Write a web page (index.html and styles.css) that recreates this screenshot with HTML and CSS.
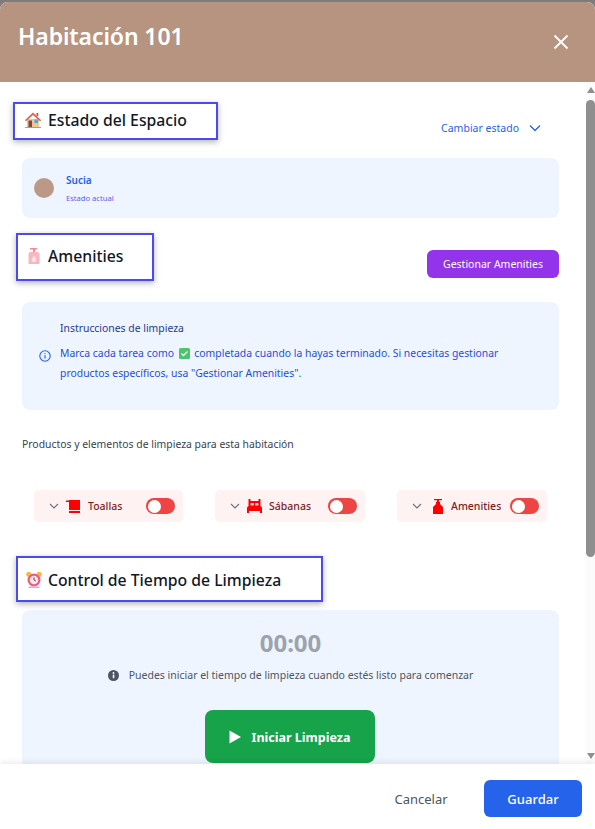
FILE: index.html
```html
<!DOCTYPE html>
<html lang="es">
<head>
<meta charset="utf-8">
<title>Habitación 101</title>
<link rel="stylesheet" href="styles.css">
</head>
<body>
<div class="behind"><span class="behind-a">Chat</span><span class="behind-b">Precios Inteligentes</span></div>
<div class="modal">
  <header class="modal-header">
    <h1>Habitación 101</h1>
    <svg class="close" width="16" height="16" viewBox="0 0 16 16"><path d="M1.500 1.500l13 13M14.500 1.500l-13 13" stroke="#fff" stroke-width="1.800" fill="none"/></svg>
  </header>
  <div class="modal-main">
    <div class="content">
      <section class="row row-estado">
        <h2 class="mark mark-estado">
          <svg class="emoji" width="18" height="18" viewBox="0 0 18 18"><path d="M3 8h12v8H3z" fill="#f2c58f"/><path d="M.8 9.200L9 1.500l8.200 7.700-1.200 1L9 4 2 10.200z" fill="#e8604c"/><path d="M4.500 9.500h3.500V16H4.500z" fill="#7a4a3c"/><path d="M10.500 8.500h3.500V12h-3.500z" fill="#39aee8"/><path d="M1 16h16v1H1z" fill="#5fc86a"/><path d="M12.500 2h1.800v3h-1.800z" fill="#c9543f"/></svg>
          <span>Estado del Espacio</span>
        </h2>
        <div class="change"><span>Cambiar estado</span><svg width="12" height="8" viewBox="0 0 12 8"><path d="M1 1.500l5 5 5-5" stroke="#2563eb" stroke-width="1.300" fill="none"/></svg></div>
      </section>
      <div class="card status">
        <i class="dot"></i>
        <div class="status-text"><b>Sucia</b><small>Estado actual</small></div>
      </div>
      <section class="row row-amen">
        <h2 class="mark mark-amen">
          <svg class="emoji" width="18" height="18" viewBox="0 0 18 18"><path d="M5 1h7v1.500H10V5H8V2.500H5z" fill="#ef8a9a"/><path d="M3.500 7c0-1.300 1-2 2.500-2h6c1.500 0 2.500.7 2.500 2v10h-11z" fill="#f7b6c2"/><path d="M9 8.500c1.500 2 2.300 3 2.300 4.200a2.300 2.300 0 0 1-4.600 0c0-1.200.8-2.200 2.300-4.200z" fill="#fde3e8"/></svg>
          <span>Amenities</span>
        </h2>
        <button class="manage">Gestionar Amenities</button>
      </section>
      <div class="card info">
        <svg class="info-icon" width="12" height="12" viewBox="0 0 12 12"><circle cx="6" cy="6" r="5.200" fill="none" stroke="#2563eb" stroke-width="1.100"/><path d="M6 5.300v3.200" stroke="#2563eb" stroke-width="1.200"/><circle cx="6" cy="3.600" r=".7" fill="#2563eb"/></svg>
        <div class="info-text">
          <p class="info-title">Instrucciones de limpieza</p>
          <p class="info-body">Marca cada tarea como <svg class="check" width="11" height="11" viewBox="0 0 11 11"><rect width="11" height="11" rx="1.500" fill="#4cc46f"/><path d="M2.500 5.500l2 2 4-4" stroke="#eafff0" stroke-width="1.300" fill="none"/></svg> completada cuando la hayas terminado. Si necesitas gestionar productos específicos, usa "Gestionar Amenities".</p>
        </div>
      </div>
      <p class="products">Productos y elementos de limpieza para esta habitación</p>
      <div class="chips">
        <div class="chip chip-first">
          <svg class="chev" width="10" height="6" viewBox="0 0 10 6"><path d="M1 1l4 4 4-4" stroke="#6b7280" stroke-width="1.100" fill="none"/></svg>
          <svg class="chip-icon" width="15" height="15" viewBox="0 0 15 15"><path d="M0 1.500h3V1h11v10H3V3H1.500V3H0z" fill="#f00"/><path d="M3 12h11v2H3z" fill="#f00"/></svg>
          <span class="chip-label">Toallas</span>
          <i class="toggle"></i>
        </div>
        <div class="chip">
          <svg class="chev" width="10" height="6" viewBox="0 0 10 6"><path d="M1 1l4 4 4-4" stroke="#6b7280" stroke-width="1.100" fill="none"/></svg>
          <svg class="chip-icon" width="15" height="15" viewBox="0 0 15 15"><path d="M1.500 0h2v2h8V0h2v7l1.500 1.500V14h-2v-2H2v2H0V8.500L1.500 7z" fill="#f00"/><rect x="3.500" y="4" width="3.500" height="2.500" rx=".8" fill="#ffd0d0"/><rect x="8" y="4" width="3.500" height="2.500" rx=".8" fill="#ffd0d0"/></svg>
          <span class="chip-label">Sábanas</span>
          <i class="toggle"></i>
        </div>
        <div class="chip chip-third">
          <svg class="chev" width="10" height="6" viewBox="0 0 10 6"><path d="M1 1l4 4 4-4" stroke="#6b7280" stroke-width="1.100" fill="none"/></svg>
          <svg class="chip-icon" width="12" height="15" viewBox="0 0 12 15"><path d="M2 0h8v1.200H7V3h1v2l3 3v7H1V8l3-3V3h1V1.200H2z" fill="#f00"/></svg>
          <span class="chip-label">Amenities</span>
          <i class="toggle"></i>
        </div>
      </div>
      <h2 class="mark mark-time">
        <svg class="emoji" width="18" height="18" viewBox="0 0 18 18"><circle cx="3.800" cy="3.300" r="2.600" fill="#f4b942"/><circle cx="14.200" cy="3.300" r="2.600" fill="#f4b942"/><circle cx="9" cy="9" r="6.500" fill="#ef5a7a"/><circle cx="9" cy="9" r="4.300" fill="#fde8ec"/><path d="M9 6.300V9l1.800 1" stroke="#6a3a50" stroke-width="1" fill="none"/><path d="M3.500 15.500h11V17h-11z" fill="#d6a8dc"/></svg>
        <span>Control de Tiempo de Limpieza</span>
      </h2>
      <div class="card timer">
        <div class="clock">00:00</div>
        <p class="hint"><svg width="11" height="11" viewBox="0 0 12 12"><circle cx="6" cy="6" r="6" fill="#4b5563"/><rect x="5.200" y="5" width="1.700" height="4" fill="#fff"/><circle cx="6" cy="3.300" r="1" fill="#fff"/></svg><span>Puedes iniciar el tiempo de limpieza cuando estés listo para comenzar</span></p>
        <button class="start"><svg width="12" height="14" viewBox="0 0 12 14"><path d="M.5.500L12 7 .5 13.500z" fill="#fff"/></svg><span>Iniciar Limpieza</span></button>
      </div>
    </div>
    <div class="scrollbar">
      <i class="arrow-up"></i>
      <i class="thumb"></i>
      <i class="arrow-down"></i>
    </div>
  </div>
  <footer class="modal-footer">
    <button class="cancel">Cancelar</button>
    <button class="save">Guardar</button>
  </footer>
</div>
</body>
</html>
```
FILE: styles.css
```css
* { box-sizing: border-box; }
html, body { margin: 0; height: 829px; overflow: hidden; }
body { background: #7c7c7c; font-family: "Noto Sans", "Open Sans", sans-serif; position: relative; padding-top: 2px; }
h1, h2, p { margin: 0; }
button { font-family: inherit; border: 0; cursor: pointer; }
.behind { position: absolute; top: -13px; left: 0; height: 15px; overflow: hidden; font-size: 16px; line-height: 20px; color: #333; white-space: nowrap; }
.behind-a { position: absolute; left: 56px; }
.behind-b { position: absolute; left: 163px; }
.modal { height: 827px; background: #fff; border-radius: 8px 8px 0 0; display: flex; flex-direction: column; overflow: hidden; }
.modal-header { height: 80px; flex: none; background: #b79480; display: flex; justify-content: space-between; padding: 18px 26px 0 18px; }
.modal-header h1 { font-size: 23px; line-height: 32px; font-weight: 600; color: #fff; letter-spacing: -.1px; }
.close { margin-top: 14px; }
.modal-main { flex: 1; min-height: 0; display: flex; overflow: hidden; }
.content { flex: 1; min-width: 0; padding: 20px 27px 0 22px; overflow: hidden; }
.row { display: flex; justify-content: space-between; }
.mark { border: 2px solid #4a4af0; box-shadow: 0 2px 6px rgba(0,0,0,.3); background: #fff; display: flex; align-items: center; font-size: 15.750px; font-weight: 500; color: #111827; }
.mark .emoji { flex: none; }
.mark-estado { width: 205px; height: 38px; margin-left: -9px; padding: 0 0 2px 9px; }
.mark-estado span { margin-left: 6px; }
.change { display: flex; align-items: center; gap: 10px; margin: 20px 18px 0 0; height: 12px; font-size: 10.500px; color: #2563eb; }
.card { background: #eff5ff; border-radius: 8px; }
.status { height: 60px; margin-top: 18px; display: flex; align-items: center; padding-left: 12px; }
.dot { width: 20px; height: 20px; border-radius: 50%; background: #bb9986; }
.status-text { margin-left: 12px; display: flex; flex-direction: column; margin-top: 1px; }
.status-text b { font-size: 10px; line-height: 14px; font-weight: 600; color: #2563eb; }
.status-text small { font-size: 7.600px; line-height: 12px; margin-top: 5px; color: #5b5cf0; }
.row-amen { margin-top: 15px; }
.mark-amen { width: 138px; height: 48px; margin-left: -6px; padding: 0 0 3px 7px; }
.mark-amen span { margin-left: 5px; }
.manage { width: 132px; height: 28px; margin-top: 17px; border-radius: 6px; background: #9333ea; color: #fff; font-size: 10.500px; }
.info { height: 108px; margin-top: 21px; display: flex; align-items: center; padding: 0 50px 0 17px; }
.info-icon { flex: none; margin-top: -1px; }
.info-text { margin-left: 9px; margin-top: -11px; }
.info-title { font-size: 10.400px; line-height: 20px; color: #1e3a8a; }
.info-body { font-size: 10.400px; line-height: 20px; margin-top: 5px; color: #1d4ed8; }
.check { vertical-align: -1.500px; margin: 0 2px; }
.products { margin-top: 26px; font-size: 10.400px; line-height: 16px; color: #374151; }
.chips { display: flex; margin: 38px 12px 0 12px; gap: 32px; }
.chip { width: 150px; height: 32px; border-radius: 5px; background: #fef2f2; display: flex; align-items: center; padding: 0 8px 0 15px; color: #7f1d1d; }
.chip-first { width: 149px; }
.chev { flex: none; }
.chip-icon { flex: none; margin-left: 7px; }
.chip-label { flex: 1; margin-left: 7px; font-size: 10.500px; font-weight: 500; }
.chip-third .chip-icon { margin-left: 10px; }
.toggle { width: 29px; height: 16px; border-radius: 8px; background: #ef4444; position: relative; flex: none; }
.toggle::after { content: ""; position: absolute; left: 1.500px; top: 1.500px; width: 13px; height: 13px; border-radius: 50%; background: #fff; }
.mark-time { width: 307px; height: 46px; margin: 34px 0 0 -6px; padding: 1px 0 0 7px; }
.mark-time span { margin-left: 5px; }
.timer { margin-top: 8px; height: 200px; display: flex; flex-direction: column; align-items: center; padding-top: 17px; }
.clock { font-size: 24px; line-height: 32px; font-weight: 700; color: #9ca3af; }
.hint { display: flex; align-items: center; gap: 10px; margin-top: 8px; font-size: 10.500px; line-height: 16px; color: #4b5563; }
.start { width: 170px; height: 53px; margin: 27px 2px 0 0; padding: 1px 0 0; border-radius: 8px; background: #16a34a; color: #fff; font-size: 12.500px; font-weight: 700; display: flex; align-items: center; justify-content: center; gap: 11px; }
.scrollbar { width: 9px; flex: none; background: #fbfbfb; display: flex; flex-direction: column; align-items: center; }
.arrow-up { margin-top: 5px; border: 4.500px solid transparent; border-top: 0; border-bottom: 6px solid #8f8f8f; }
.thumb { width: 9px; height: 457px; margin-top: 7px; border-radius: 5px; background: #8f8f8f; }
.arrow-down { margin-top: 196px; border: 4.500px solid transparent; border-bottom: 0; border-top: 6px solid #8f8f8f; }
.modal-footer { height: 65px; flex: none; background: #fff; box-shadow: 0 -2px 6px rgba(0,0,0,.08); position: relative; display: flex; justify-content: flex-end; align-items: flex-start; padding: 16px 13px 0 0; }
.cancel { width: 100px; height: 37px; margin-right: 13px; background: none; color: #4b5563; font-size: 13px; }
.save { width: 98px; height: 37px; border-radius: 6px; background: #2563eb; color: #fff; font-size: 13px; font-weight: 500; }
```
